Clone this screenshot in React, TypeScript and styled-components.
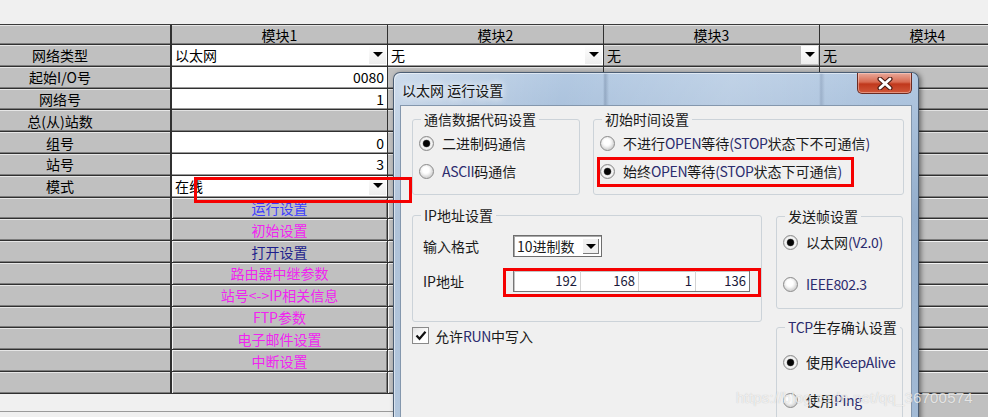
import React from 'react';
import styled, { createGlobalStyle, css } from 'styled-components';

const GlobalStyle = createGlobalStyle`
  html, body {
    margin: 0;
    padding: 0;
    background: #f0f0f0;
  }
  body {
    overflow: hidden;
    font-family: "Noto Sans CJK SC", "Liberation Sans", sans-serif;
  }
`;

const BLUE = '#3c3cff';
const MAGENTA = '#f024f0';
const NAVY = '#1e1e8c';

type Tone = 'label' | 'header' | 'white' | 'gray' | 'button';
type Align = 'left' | 'center' | 'right';

interface CellSpec {
  tone: Tone;
  text?: string;
  align?: Align;
  drop?: boolean;
  color?: string;
}

const Screen = styled.div`
  position: relative;
  width: 988px;
  height: 417px;
  overflow: hidden;
  background: #f0f0f0;
  display: flex;
  flex-direction: column;
`;

const TopGap = styled.div`
  flex: none;
  height: 24px;
`;

const Grid = styled.div`
  flex: none;
  display: grid;
  grid-template-columns: 172px repeat(4, 216px);
  grid-template-rows: 20px repeat(16, 21.8px);
  width: 1036px;
  border-top: 1px solid #3a3a3a;
`;

const toneCss = {
  label: css`
    background: #c0c0c0;
    box-shadow: inset 0 1px 0 #e6e6e6, inset 0 -1px 0 #7c7c7c;
    border-right-width: 2px;
  `,
  header: css`
    background: #c0c0c0;
    box-shadow: inset 0 1px 0 #e6e6e6, inset 0 -1px 0 #7c7c7c;
  `,
  white: css`
    background: #ffffff;
    box-shadow: inset 0 -1px 0 #9a9a9a;
  `,
  gray: css`
    background: #c0c0c0;
    box-shadow: inset 0 1px 0 #e2e2e2, inset 0 -1px 0 #7c7c7c;
  `,
  button: css`
    background: #c0c0c0;
    box-shadow: inset 1px 1px 0 #f2f2f2, inset -1px -1px 0 #7c7c7c;
  `,
};

const Cell = styled.div<{ $tone: Tone }>`
  box-sizing: border-box;
  display: flex;
  align-items: center;
  min-width: 0;
  overflow: hidden;
  white-space: nowrap;
  font-size: 14px;
  line-height: 1;
  color: #000;
  border: 0 solid #303030;
  border-bottom-width: 1px;
  border-right-width: 1px;
  ${p => toneCss[p.$tone]}
`;

const LabelText = styled.span`
  flex: 1;
  text-align: center;
  padding-right: 50px;
`;

const CellText = styled.span<{ $align: Align; $color?: string }>`
  flex: 1;
  padding: 0 3px;
  text-align: ${p => p.$align};
  color: ${p => p.$color ?? '#000'};
`;

const DropBtn = styled.span`
  flex: none;
  align-self: stretch;
  width: 17px;
  margin: 1px 1px 2px 0;
  display: flex;
  align-items: center;
  justify-content: center;
  background: linear-gradient(#fefefe, #ededed);
`;

const Caret = styled.span`
  width: 0;
  height: 0;
  border-left: 5px solid transparent;
  border-right: 5px solid transparent;
  border-top: 5px solid #000;
`;

const BottomRow = styled.div`
  flex: 1;
  display: flex;
`;

const BottomBar = styled.div`
  flex: none;
  width: 393px;
  height: 17px;
  border-bottom: 1px solid #9a9a9a;
  background: #f0f0f0;
`;

const BottomFill = styled.div`
  flex: 1;
  background: #c0c0c0;
  box-shadow: inset 0 1px 0 #e2e2e2;
`;

/* ---------- dialog ---------- */

const Dialog = styled.div`
  position: absolute;
  left: 393px;
  top: 72px;
  width: 526px;
  height: 360px;
  box-sizing: border-box;
  border: 1px solid #4c5e74;
  border-bottom: none;
  border-radius: 7px 7px 0 0;
  padding: 0 6px;
  display: flex;
  flex-direction: column;
  background:
    linear-gradient(90deg, transparent 209px, rgba(70, 90, 120, 0.28) 211px, transparent 215px),
    linear-gradient(90deg, transparent 425px, rgba(70, 90, 120, 0.22) 427px, transparent 431px),
    linear-gradient(105deg, rgba(255, 255, 255, 0.35) 0%, rgba(255, 255, 255, 0) 28%, rgba(255, 255, 255, 0.18) 55%, rgba(255, 255, 255, 0) 80%),
    linear-gradient(180deg, #b3c9e2 0%, #93adcb 40%, #a4bcd7 100%);
  box-shadow: 2px 1px 5px rgba(0, 0, 0, 0.45), inset 1px 1px 0 rgba(255, 255, 255, 0.5);
`;

const TitleBar = styled.div`
  flex: none;
  height: 32px;
  display: flex;
  align-items: flex-start;
  justify-content: space-between;
`;

const Title = styled.span`
  padding: 9px 0 0 2px;
  font-size: 14px;
  line-height: 16px;
  color: #141414;
  text-shadow: 0 0 6px rgba(255, 255, 255, 0.95), 0 0 10px rgba(255, 255, 255, 0.8);
`;

const CloseBtn = styled.span`
  width: 55px;
  height: 21px;
  box-sizing: border-box;
  border: 1px solid #6a2b22;
  border-top: none;
  border-radius: 0 0 5px 5px;
  display: flex;
  align-items: center;
  justify-content: center;
  background: linear-gradient(180deg, #e9a99a 0%, #d86b52 45%, #c0381c 55%, #d0573a 100%);
  box-shadow: inset 0 0 0 1px rgba(255, 220, 210, 0.45);
`;

const Client = styled.div`
  flex: 1;
  background: #f0f0f0;
  border: 1px solid #8497ad;
  border-bottom: none;
  padding: 5px 7px 0 11px;
  display: flex;
  flex-direction: column;
  gap: 12px;
  font-size: 14px;
  color: #1a1a1a;
`;

const TopRow = styled.div`
  display: flex;
  gap: 13px;
`;

const BodyRow = styled.div`
  display: grid;
  grid-template-columns: 350px 127px;
  column-gap: 14px;
  align-items: start;
`;

const Column = styled.div<{ $gap: number; $offset?: number }>`
  display: flex;
  flex-direction: column;
  gap: ${p => p.$gap}px;
  margin-top: ${p => p.$offset ?? 0}px;
`;

const Group = styled.fieldset<{ $w: number; $h: number }>`
  margin: 0;
  padding: 0;
  min-width: 0;
  box-sizing: border-box;
  width: ${p => p.$w}px;
  height: ${p => p.$h}px;
  border: 1px solid #ccd3d9;
  border-radius: 3px;
`;

const Legend = styled.legend`
  margin-left: 8px;
  padding: 0 3px;
  font-size: 14px;
  line-height: 16px;
  color: #1a1a1a;
  white-space: nowrap;
`;

const GroupBody = styled.div<{ $top: number; $gap: number; $left?: number }>`
  display: flex;
  flex-direction: column;
  gap: ${p => p.$gap}px;
  padding: ${p => p.$top}px 0 0 ${p => p.$left ?? 6}px;
`;

const Option = styled.div`
  display: flex;
  align-items: center;
  gap: 8px;
  height: 24px;
  white-space: nowrap;
  line-height: 16px;
`;

const RadioMark = styled.span<{ $on?: boolean }>`
  flex: none;
  width: 15px;
  height: 15px;
  box-sizing: border-box;
  border-radius: 50%;
  border: 1px solid #8b8b8b;
  background: ${p =>
    p.$on
      ? 'radial-gradient(circle, #050505 0 2.8px, #3c3c3c 3.4px, #e4e4e4 4.1px, #f7f7f7 5px, #d6d6d6 7px)'
      : 'radial-gradient(circle at 45% 40%, #ffffff 0 3px, #f3f3f3 4.5px, #d6d6d6 7px)'};
`;

const Lat = styled.span`
  color: #2c2c6e;
  letter-spacing: -0.35px;
`;

const FieldRow = styled.div`
  display: flex;
  align-items: center;
  height: 22px;
`;

const FieldLabel = styled.span`
  width: 90px;
  flex: none;
  line-height: 16px;
`;

const Combo = styled.div`
  display: flex;
  align-items: center;
  width: 89px;
  height: 22px;
  box-sizing: border-box;
  border: 1px solid #6e6e6e;
  box-shadow: inset 1px 1px 0 #a8a8a8;
  background: #fff;
  padding: 2px 2px 2px 0;
`;

const ComboText = styled.span`
  flex: 1;
  padding-left: 3px;
  font-size: 14px;
  line-height: 16px;
  white-space: nowrap;
`;

const ComboBtn = styled.span`
  flex: none;
  width: 17px;
  align-self: stretch;
  display: flex;
  align-items: center;
  justify-content: center;
  background: #f0f0f0;
  box-shadow: inset 1px 1px 0 #ffffff, inset -1px -1px 0 #7a7a7a;
`;

const IpBox = styled.div`
  display: flex;
  width: 237px;
  height: 22px;
  box-sizing: border-box;
  border: 1px solid #767676;
  box-shadow: inset 1px 1px 0 #c4c4c4;
  background: #fff;
`;

const IpField = styled.span<{ $w: number; $last?: boolean }>`
  box-sizing: border-box;
  width: ${p => p.$w}px;
  flex: none;
  padding-right: 3px;
  text-align: right;
  font-size: 13px;
  line-height: 20px;
  color: #1a1a3a;
  border-right: ${p => (p.$last ? 'none' : '1px solid #d4d4d4')};
`;

const CheckRow = styled.div`
  display: flex;
  align-items: center;
  gap: 6px;
  height: 17px;
  margin-top: -7px;
  line-height: 16px;
`;

const CheckBox = styled.span`
  flex: none;
  width: 17px;
  height: 17px;
  box-sizing: border-box;
  border: 1px solid #8a8a8a;
  background: linear-gradient(135deg, #e2e2e2, #ffffff 60%);
  display: flex;
  align-items: center;
  justify-content: center;
`;

/* ---------- overlays ---------- */

const RedBox = styled.div<{ $x: number; $y: number; $w: number; $h: number }>`
  position: absolute;
  left: ${p => p.$x}px;
  top: ${p => p.$y}px;
  width: ${p => p.$w}px;
  height: ${p => p.$h}px;
  box-sizing: border-box;
  border: 3px solid #f50000;
  pointer-events: none;
`;

const Watermark = styled.div`
  position: absolute;
  left: 736px;
  top: 389px;
  font-family: "Liberation Sans", Arial, sans-serif;
  font-size: 15px;
  letter-spacing: 0.2px;
  color: rgba(255, 255, 255, 0.72);
  text-shadow: 0 0 1px rgba(90, 90, 90, 0.35);
  white-space: nowrap;
  pointer-events: none;
`;

/* ---------- data ---------- */

const gray: CellSpec = { tone: 'gray' };
const btn: CellSpec = { tone: 'button' };

const HEADERS = ['', '模块1', '模块2', '模块3', '模块4'];

const PARAMS: { label: string; cells: CellSpec[] }[] = [
  {
    label: '网络类型',
    cells: [
      { tone: 'white', text: '以太网', drop: true },
      { tone: 'white', text: '无', drop: true },
      { tone: 'gray', text: '无', drop: true },
      { tone: 'gray', text: '无', drop: true },
    ],
  },
  { label: '起始I/O号', cells: [{ tone: 'white', text: '0080', align: 'right' }, gray, gray, gray] },
  { label: '网络号', cells: [{ tone: 'white', text: '1', align: 'right' }, gray, gray, gray] },
  { label: '总(从)站数', cells: [gray, gray, gray, gray] },
  { label: '组号', cells: [{ tone: 'white', text: '0', align: 'right' }, gray, gray, gray] },
  { label: '站号', cells: [{ tone: 'white', text: '3', align: 'right' }, gray, gray, gray] },
  { label: '模式', cells: [{ tone: 'white', text: '在线', drop: true }, gray, gray, gray] },
];

const SETTINGS: [string, string][] = [
  ['运行设置', BLUE],
  ['初始设置', MAGENTA],
  ['打开设置', NAVY],
  ['路由器中继参数', MAGENTA],
  ['站号<->IP相关信息', MAGENTA],
  ['FTP参数', MAGENTA],
  ['电子邮件设置', MAGENTA],
  ['中断设置', MAGENTA],
];

const ROWS: { label: string; cells: CellSpec[] }[] = [
  ...PARAMS,
  ...SETTINGS.map(([text, color]) => ({
    label: '',
    cells: [{ tone: 'button' as Tone, text, align: 'center' as Align, color }, btn, btn, btn],
  })),
  { label: '', cells: [btn, btn, btn, btn] },
];

const IP_PARTS: [string, number][] = [
  ['192', 67],
  ['168', 58],
  ['1', 57],
  ['136', 53],
];

/* ---------- components ---------- */

const GridCell = ({ spec }: { spec: CellSpec }) => (
  <Cell $tone={spec.tone}>
    <CellText $align={spec.align ?? 'left'} $color={spec.color}>
      {spec.text}
    </CellText>
    {spec.drop && (
      <DropBtn>
        <Caret />
      </DropBtn>
    )}
  </Cell>
);

const Radio = ({ on, children }: { on?: boolean; children: React.ReactNode }) => (
  <Option>
    <RadioMark $on={on} />
    <span>{children}</span>
  </Option>
);

const CloseGlyph = () => (
  <svg width="18" height="13" viewBox="0 0 18 13">
    <path d="M4 2 L14 11 M14 2 L4 11" stroke="#4a1a12" strokeWidth="5" strokeLinecap="round" />
    <path d="M4 2 L14 11 M14 2 L4 11" stroke="#ffffff" strokeWidth="2.8" strokeLinecap="round" />
  </svg>
);

const Tick = () => (
  <svg width="12" height="11" viewBox="0 0 12 11">
    <path d="M1.5 5.5 L4.5 8.8 L10.5 1.8" fill="none" stroke="#111" strokeWidth="2.2" />
  </svg>
);

const EthernetDialog = () => (
  <Dialog>
    <TitleBar>
      <Title>以太网 运行设置</Title>
      <CloseBtn>
        <CloseGlyph />
      </CloseBtn>
    </TitleBar>
    <Client>
      <TopRow>
        <Group $w={168} $h={84}>
          <Legend>通信数据代码设置</Legend>
          <GroupBody $top={4} $gap={4}>
            <Radio on>二进制码通信</Radio>
            <Radio>
              <Lat>ASCII</Lat>码通信
            </Radio>
          </GroupBody>
        </Group>
        <Group $w={311} $h={84}>
          <Legend>初始时间设置</Legend>
          <GroupBody $top={4} $gap={4}>
            <Radio>
              不进行<Lat>OPEN</Lat>等待<Lat>(STOP</Lat>状态下不可通信<Lat>)</Lat>
            </Radio>
            <Radio on>
              始终<Lat>OPEN</Lat>等待<Lat>(STOP</Lat>状态下可通信<Lat>)</Lat>
            </Radio>
          </GroupBody>
        </Group>
      </TopRow>
      <BodyRow>
        <Column $gap={12}>
          <Group $w={350} $h={115}>
            <Legend>IP地址设置</Legend>
            <GroupBody $top={12} $gap={13} $left={10}>
              <FieldRow>
                <FieldLabel>输入格式</FieldLabel>
                <Combo>
                  <ComboText>10进制数</ComboText>
                  <ComboBtn>
                    <Caret />
                  </ComboBtn>
                </Combo>
              </FieldRow>
              <FieldRow>
                <FieldLabel>IP地址</FieldLabel>
                <IpBox>
                  {IP_PARTS.map(([v, w], i) => (
                    <IpField key={i} $w={w} $last={i === IP_PARTS.length - 1}>
                      {v}
                    </IpField>
                  ))}
                </IpBox>
              </FieldRow>
            </GroupBody>
          </Group>
          <CheckRow>
            <CheckBox>
              <Tick />
            </CheckBox>
            <span>
              允许<Lat>RUN</Lat>中写入
            </span>
          </CheckRow>
        </Column>
        <Column $gap={10} $offset={1}>
          <Group $w={127} $h={101}>
            <Legend>发送帧设置</Legend>
            <GroupBody $top={6} $gap={18}>
              <Radio on>
                以太网<Lat>(V2.0)</Lat>
              </Radio>
              <Radio>
                <Lat>IEEE802.3</Lat>
              </Radio>
            </GroupBody>
          </Group>
          <Group $w={127} $h={110}>
            <Legend>
              <Lat>TCP</Lat>生存确认设置
            </Legend>
            <GroupBody $top={15} $gap={14}>
              <Radio on>
                使用<Lat>KeepAlive</Lat>
              </Radio>
              <Radio>
                使用<Lat>Ping</Lat>
              </Radio>
            </GroupBody>
          </Group>
        </Column>
      </BodyRow>
    </Client>
  </Dialog>
);

const App = () => (
  <>
    <GlobalStyle />
    <Screen>
      <TopGap />
      <Grid>
        {HEADERS.map((h, i) => (
          <Cell key={`h${i}`} $tone={i === 0 ? 'label' : 'header'}>
            <CellText $align="center">{h}</CellText>
          </Cell>
        ))}
        {ROWS.map((row, r) => (
          <React.Fragment key={r}>
            <Cell $tone="label">
              <LabelText>{row.label}</LabelText>
            </Cell>
            {row.cells.map((c, i) => (
              <GridCell key={i} spec={c} />
            ))}
          </React.Fragment>
        ))}
      </Grid>
      <BottomRow>
        <BottomBar />
        <BottomFill />
      </BottomRow>
      <EthernetDialog />
      <RedBox $x={194} $y={177} $w={218} $h={26} />
      <RedBox $x={597} $y={157} $w={257} $h={30} />
      <RedBox $x={503} $y={268} $w={258} $h={29} />
      <Watermark>https://blog.csdn.net/qq_36700574</Watermark>
    </Screen>
  </>
);

export default App;
